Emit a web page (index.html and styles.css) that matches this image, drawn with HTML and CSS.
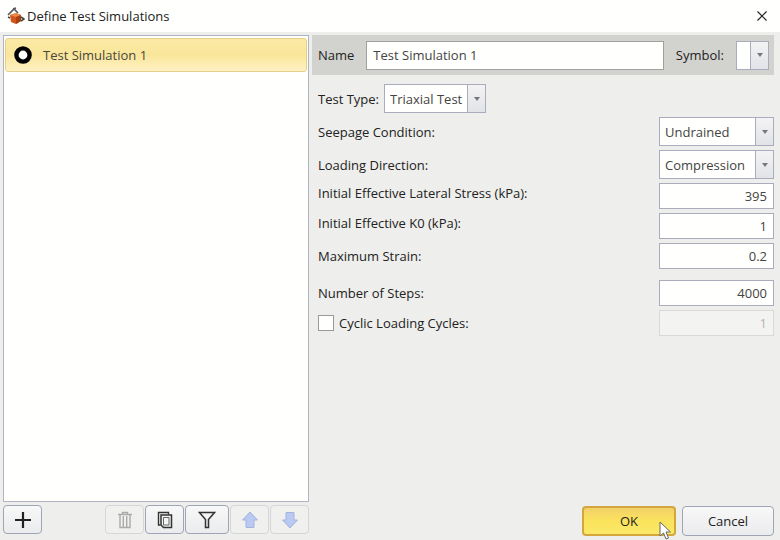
FILE: index.html
```
<!DOCTYPE html>
<html lang="en">
<head>
  <meta charset="UTF-8">
  <meta name="viewport" content="width=device-width">
  <title>Define Test Simulations</title>
  <link rel="stylesheet" href="styles.css">
</head>
<body>
<header class="titlebar">
  <svg class="app-icon" width="18" height="18" viewBox="0 0 18 18">
    <path d="M3 8l6-2 5 2v6l-5 3-5-2z" fill="#d2561c"/>
    <path d="M3 8l6-2 5 2-5 2z" fill="#e88a4c"/>
    <path d="M9 10l5-2v6l-5 3z" fill="#a8400f"/>
    <path d="M1 8l6-6 4 4M6 2l3-1" fill="none" stroke="#555" stroke-width="1.6"/>
    <path d="M1 10l2 1M14 10l3 2-3 2" fill="none" stroke="#444" stroke-width="1.6"/>
  </svg>
  <h1>Define Test Simulations</h1>
  <button class="close" type="button" aria-label="Close">
    <svg width="10" height="10" viewBox="0 0 10 10"><path d="M.5.5l9 9M9.5.5l-9 9" stroke="#222" stroke-width="1.2"/></svg>
  </button>
</header>
<main>
  <section class="sidebar">
    <ul class="list">
      <li><button class="item" type="button">
        <svg width="18" height="18" viewBox="0 0 18 18"><circle cx="9" cy="9" r="6.600" fill="#fff" stroke="#000" stroke-width="4.400"/></svg>
        Test Simulation 1
      </button></li>
    </ul>
    <div class="tools">
      <button class="tool add" type="button" aria-label="Add">
        <svg width="18" height="18" viewBox="0 0 18 18"><path d="M9 1v16M1 9h16" stroke="#222" stroke-width="2.2"/></svg>
      </button>
      <button class="tool" type="button" aria-label="Delete" disabled>
        <svg width="16" height="18" viewBox="0 0 16 18"><path d="M1 3.500h14M5.500 3V1.500h5V3M3 4v12.500h10V4M6.300 5v11M9.700 5v11" fill="none" stroke="#aaa" stroke-width="1.400"/></svg>
      </button>
      <button class="tool" type="button" aria-label="Duplicate">
        <svg width="16" height="18" viewBox="0 0 16 18"><path d="M3.500 14H1.500V1.500h10v2" fill="none" stroke="#333" stroke-width="1.400"/><path d="M4 4h10.500v12.500H6.500L4 14z" fill="none" stroke="#333" stroke-width="1.500"/><path d="M6.500 6.500H12v7.500H6.500z" fill="#f4f5f5" stroke="#666"/></svg>
      </button>
      <button class="tool filter" type="button" aria-label="Filter">
        <svg width="18" height="18" viewBox="0 0 18 18"><path d="M1.500 1.500h15L10.500 8.500v8h-3v-8z" fill="none" stroke="#333" stroke-width="1.5"/></svg>
      </button>
      <button class="tool" type="button" aria-label="Move up" disabled>
        <svg width="18" height="18" viewBox="0 0 18 18"><path d="M9 1l7.500 8H13v7.500H5V9H1.500z" fill="#b9c9f2" stroke="#a4b4de"/></svg>
      </button>
      <button class="tool" type="button" aria-label="Move down" disabled>
        <svg width="18" height="18" viewBox="0 0 18 18"><path d="M9 17l7.500-8H13V1.500H5V9H1.500z" fill="#b9c9f2" stroke="#a4b4de"/></svg>
      </button>
    </div>
  </section>
  <form class="details">
    <div class="heading">
      <label for="name">Name</label>
      <input class="field name" id="name" type="text" value="Test Simulation 1">
      <label for="symbol">Symbol:</label>
      <span class="combo symbol"><select id="symbol"><option></option></select></span>
    </div>
    <div class="type">
      <label for="type">Test Type:</label>
      <span class="combo"><select id="type"><option>Triaxial Test</option></select></span>
    </div>
    <div class="rows">
      <div class="row">
        <label for="seepage">Seepage Condition:</label>
        <span class="combo"><select id="seepage"><option>Undrained</option></select></span>
      </div>
      <div class="row">
        <label for="direction">Loading Direction:</label>
        <span class="combo"><select id="direction"><option>Compression</option></select></span>
      </div>
      <div class="row top">
        <label for="stress">Initial Effective Lateral Stress (kPa):</label>
        <input class="field number" id="stress" type="text" value="395">
      </div>
      <div class="row top">
        <label for="k0">Initial Effective K0 (kPa):</label>
        <input class="field number" id="k0" type="text" value="1">
      </div>
      <div class="row">
        <label for="strain">Maximum Strain:</label>
        <input class="field number" id="strain" type="text" value="0.2">
      </div>
      <div class="row steps">
        <label for="steps">Number of Steps:</label>
        <input class="field number" id="steps" type="text" value="4000">
      </div>
      <div class="row">
        <label class="check"><input type="checkbox"> Cyclic Loading Cycles:</label>
        <input class="field number" type="text" value="1" aria-label="Cycles" disabled>
      </div>
    </div>
    <div class="actions">
      <button class="btn ok" type="submit">OK
        <svg class="cursor" width="12" height="19" viewBox="0 0 12 19"><path d="M1 1v14l3.500-3 2.500 6 2.500-1L7 11h4.500z" fill="#fff" stroke="#666"/></svg>
      </button>
      <button class="btn" type="button">Cancel</button>
    </div>
  </form>
</main>
</body>
</html>
```
FILE: styles.css
```
* { box-sizing: border-box; }
body { margin: 0; height: 100vh; display: flex; flex-direction: column;
  background: #eeeeec; color: #222; font: 13px/20px "Open Sans", sans-serif; }
button, input, select { font: inherit; color: inherit; margin: 0; }
svg { display: block; flex: none; }

.titlebar { display: flex; align-items: center; height: 32px; flex: none;
  padding: 0 12px 0 7px; gap: 2px; background: #fffffd; }
.titlebar h1 { flex: 1; margin: 0; font-size: 13px; font-weight: 400; }
.close { border: 0; padding: 0 1px; background: none; }

main { flex: 1; display: flex; min-height: 0; padding: 3px 6px 4px 3px; gap: 3px; }

/* simulation list */
.sidebar { flex: 0 0 40%; max-width: 306px; display: flex; flex-direction: column; gap: 3px; }
.list { flex: 1; margin: 0; padding: 2px 1px; list-style: none;
  background: #fffffd; border: 1px solid #b0b4c2; }
.item { display: flex; align-items: center; gap: 11px; width: 100%; height: 34px;
  padding: 0 8px; border: 1px solid #e6cf86; border-radius: 3px; color: #48473c;
  background: linear-gradient(#fbe9a6, #fae69a 50%, #fdf1c4); }
.tools { display: flex; gap: 1px; padding-bottom: 2px; }
.tool { display: flex; align-items: center; justify-content: center; width: 39px;
  height: 29px; padding: 0; border: 1px solid #a0a5b6; border-radius: 4px;
  background: linear-gradient(#f8f8f8, #eaebed); }
.tool:disabled { border-color: #d5d6da; background: #f0f0ef; }
.add { margin-right: auto; }
.filter { width: 44px; }

/* simulation settings */
.details { flex: 1; min-width: 0; display: flex; flex-direction: column; }
.heading { display: flex; align-items: center; height: 40px; padding: 0 5px 0 6px;
  gap: 12px; background: #d2d2ce; }
.field { border: 1px solid #a8acbc; background: #fffffd; color: #444; outline: 0; }
.name { flex: 1; min-width: 0; height: 29px; padding: 0 6px; border-color: #a0a09e; }
.combo { display: grid; height: 29px; border: 1px solid #a8acbc; color: #444; background: #fffffd; }
.combo select, .combo::before, .combo::after { grid-area: 1 / 1; }
.combo select { appearance: none; width: 100%; padding: 0 22px 0 5px; border: 0;
  border-radius: 0; background: none; outline: 0; }
.combo::before, .combo::after { content: ""; pointer-events: none; justify-self: end; }
.combo::before { width: 17px; border-left: 1px solid #a8acbc;
  background: linear-gradient(#f3f3f4, #e2e3e8); }
.combo::after { align-self: center; margin-right: 5px; border: solid transparent;
  border-width: 4px 3px 0; border-top-color: #75777f; }
.symbol { width: 33px; }
.symbol select { padding: 0; }
.type { display: flex; align-items: center; gap: 5px; padding: 9px 6px 4px; }
.rows { display: flex; flex-direction: column; gap: 4px; padding-left: 6px; }
.row { display: flex; align-items: center; justify-content: space-between; }
.top { align-items: flex-start; }
.row .combo, .number { width: 115px; }
.number { height: 26px; padding: 0 6px; text-align: right; }
.number:disabled { color: #b4b4b4; background: #f3f4f1; border-color: #d9dad8; }
.steps { margin-top: 7px; }
.check { display: flex; align-items: center; gap: 5px; }
.check input { appearance: none; width: 16px; height: 16px; background: #fffffd;
  border: 1px solid #9a9a98; }

.actions { display: flex; justify-content: flex-end; gap: 6px; margin-top: auto; }
.btn { width: 92px; height: 30px; padding: 0; border: 1px solid #a0a5b6;
  border-radius: 4px; background: linear-gradient(#f8f8f8, #eaebed); }
.ok { position: relative; width: 94px; border: 2px solid #d3a63e;
  background: linear-gradient(#f3d06a, #fae35c 50%, #fbe968); }
.cursor { position: absolute; left: 75px; top: 13px; }
```
